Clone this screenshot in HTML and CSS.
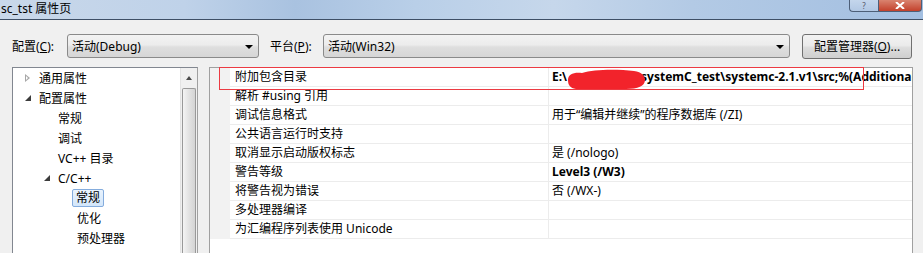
FILE: index.html
```html
<!DOCTYPE html>
<html>
<head>
    <meta charset="utf-8">
    <title>sc_tst 属性页</title>
    <link rel="stylesheet" href="styles.css">
</head>
<body>
    <div class="titlebar">
        <span class="title">sc_tst 属性页</span>
        <div class="caption-btns">
            <span class="cap-help">?</span>
            <span class="cap-close">
                <svg width="10" height="7" viewBox="0 0 10 7">
                    <path d="M1 0 L9 7 M9 0 L1 7" stroke="#fff" stroke-width="2"/>
                </svg>
            </span>
        </div>
    </div>

    <div class="toolbar">
        <label class="lbl lbl-config">配置(<u>C</u>):</label>
        <div class="combo combo-config">
            <span>活动(Debug)</span>
            <span class="arrow"></span>
        </div>
        <label class="lbl lbl-platform">平台(<u>P</u>):</label>
        <div class="combo combo-platform">
            <span>活动(Win32)</span>
            <span class="arrow"></span>
        </div>
        <button class="btn">配置管理器(<u>O</u>)...</button>
    </div>

    <div class="main">
        <div class="tree">
            <ul class="tree-list">
                <li class="lvl0"><span class="tw tw-closed"></span><span class="txt">通用属性</span></li>
                <li class="lvl0"><span class="tw tw-open"></span><span class="txt">配置属性</span></li>
                <li class="lvl1"><span class="tw"></span><span class="txt">常规</span></li>
                <li class="lvl1"><span class="tw"></span><span class="txt">调试</span></li>
                <li class="lvl1"><span class="tw"></span><span class="txt">VC++ 目录</span></li>
                <li class="lvl1"><span class="tw tw-open"></span><span class="txt">C/C++</span></li>
                <li class="lvl2"><span class="tw"></span><span class="txt selected">常规</span></li>
                <li class="lvl2"><span class="tw"></span><span class="txt">优化</span></li>
                <li class="lvl2"><span class="tw"></span><span class="txt">预处理器</span></li>
            </ul>
            <div class="vscroll">
                <div class="vs-up"><span class="vs-arrow"></span></div>
                <div class="vs-thumb"></div>
            </div>
        </div>

        <div class="grid">
            <div class="prop">
                <span class="gut"></span>
                <span class="name">附加包含目录</span>
                <span class="val bold">E:\<span class="hidden-part"></span>systemC_test\systemc-2.1.v1\src;%(AdditionalIncludeDirectories)</span>
            </div>
            <div class="prop">
                <span class="gut"></span>
                <span class="name">解析 #using 引用</span>
                <span class="val"></span>
            </div>
            <div class="prop">
                <span class="gut"></span>
                <span class="name">调试信息格式</span>
                <span class="val">用于“编辑并继续”的程序数据库 (/ZI)</span>
            </div>
            <div class="prop">
                <span class="gut"></span>
                <span class="name">公共语言运行时支持</span>
                <span class="val"></span>
            </div>
            <div class="prop">
                <span class="gut"></span>
                <span class="name">取消显示启动版权标志</span>
                <span class="val">是 (/nologo)</span>
            </div>
            <div class="prop">
                <span class="gut"></span>
                <span class="name">警告等级</span>
                <span class="val bold">Level3 (/W3)</span>
            </div>
            <div class="prop">
                <span class="gut"></span>
                <span class="name">将警告视为错误</span>
                <span class="val">否 (/WX-)</span>
            </div>
            <div class="prop">
                <span class="gut"></span>
                <span class="name">多处理器编译</span>
                <span class="val"></span>
            </div>
            <div class="prop">
                <span class="gut"></span>
                <span class="name">为汇编程序列表使用 Unicode</span>
                <span class="val"></span>
            </div>

            <!-- marcas rojas de la captura -->
            <div class="mark-box"></div>
            <svg class="smudge" width="80" height="22" viewBox="0 0 80 22">
                <path d="M2 12 C2 6, 8 4, 16 5 C28 1, 52 1, 68 3 C76 4, 79 8, 79 12 C79 18, 72 21, 60 21 C44 22, 24 22, 10 21 C4 20, 2 17, 2 12 Z" fill="#f2232b"/>
            </svg>
        </div>
    </div>
</body>
</html>
```

FILE: styles.css
```css
* {
    box-sizing: border-box;
}

body {
    margin: 0;
    width: 923px;
    height: 253px;
    overflow: hidden;
    background-color: #f0f0f0;
    font-family: "Noto Sans", "Noto Sans CJK SC", sans-serif;
    font-size: 12px;
    color: #000;
}

u {
    text-decoration: underline;
}

/* Barra de titulo */
.titlebar {
    height: 20px;
    display: flex;
    justify-content: space-between;
    border-bottom: 1px solid #3e4f66;
    background: linear-gradient(90deg, #c9d8ea 0%, #bfd2e9 20%, #a9c2e0 32%, #b9cfe8 45%, #c6d7eb 60%, #b3cae5 75%, #a3bfe1 100%);
}

.title {
    padding-left: 1px;
    line-height: 18px;
    font-size: 12px;
}

.caption-btns {
    display: flex;
    margin-right: 1px;
}

.cap-help,
.cap-close {
    height: 12px;
    display: flex;
    align-items: center;
    justify-content: center;
    border: 1px solid #4d5f78;
    border-top: none;
}

.cap-help {
    width: 29px;
    color: #556;
    font-size: 8px;
    line-height: 10px;
    border-right: none;
    border-radius: 0 0 0 4px;
    background: linear-gradient(#c4d6ec, #b2c8e4);
}

.cap-close {
    width: 44px;
    border-radius: 0 0 4px 0;
    background: linear-gradient(#d9836f, #c3412c);
}

/* Barra de configuracion */
.toolbar {
    display: flex;
    align-items: center;
    height: 24px;
    margin-top: 14px;
    padding-left: 12px;
}

.lbl-config {
    width: 55px;
}

.lbl-platform {
    width: 53px;
    margin-left: 11px;
}

.combo {
    height: 24px;
    display: flex;
    align-items: center;
    justify-content: space-between;
    padding: 0 5px 0 4px;
    border: 1px solid #8a8a8a;
    border-radius: 3px;
    background: linear-gradient(#f3f3f3 0%, #ececec 45%, #dedede 55%, #d6d6d6 100%);
}

.combo-config {
    width: 192px;
}

.combo-platform {
    width: 467px;
}

.arrow {
    width: 0;
    height: 0;
    border-left: 4px solid transparent;
    border-right: 4px solid transparent;
    border-top: 4px solid #000;
    margin-top: 2px;
}

.btn {
    width: 110px;
    height: 25px;
    margin-left: 12px;
    font-family: inherit;
    font-size: 12px;
    color: #000;
    padding: 0;
    border: 1px solid #707070;
    border-radius: 3px;
    background: linear-gradient(#f2f2f2 0%, #ebebeb 45%, #dddddd 55%, #cfcfcf 100%);
}

/* Zona principal */
.main {
    display: flex;
    margin-top: 9px;
    padding-left: 12px;
}

.tree {
    width: 186px;
    height: 186px;
    display: flex;
    border: 1px solid #828790;
    border-right-color: #a0a0a0;
    border-bottom: none;
    background-color: #fff;
}

.tree-list {
    list-style: none;
    margin: 0;
    padding: 0;
    flex: 1;
}

.tree-list li {
    height: 20px;
    display: flex;
    align-items: center;
    white-space: nowrap;
}

.lvl0 { padding-left: 11px; }
.lvl1 { padding-left: 30px; }
.lvl2 { padding-left: 49px; }

.tw {
    width: 14px;
    height: 20px;
    position: relative;
    flex: none;
}

.tw-closed::before {
    content: "";
    position: absolute;
    left: 1px;
    top: 6px;
    width: 0;
    height: 0;
    border-top: 4px solid transparent;
    border-bottom: 4px solid transparent;
    border-left: 5px solid #a7a7a7;
}

.tw-closed::after {
    content: "";
    position: absolute;
    left: 2px;
    top: 8px;
    width: 0;
    height: 0;
    border-top: 2px solid transparent;
    border-bottom: 2px solid transparent;
    border-left: 2px solid #fff;
}

.tw-open::before {
    content: "";
    position: absolute;
    left: 1px;
    top: 7px;
    width: 0;
    height: 0;
    border-left: 6px solid transparent;
    border-bottom: 6px solid #3c3c3c;
}

.txt {
    padding: 0 1px;
}

.txt.selected {
    margin-left: -4px;
    padding: 0 3px;
    height: 18px;
    line-height: 16px;
    border: 1px solid #84acdd;
    border-radius: 2px;
    background: linear-gradient(#e9f3fd, #d3e6fa);
}

.vscroll {
    width: 17px;
    flex: none;
    display: flex;
    flex-direction: column;
    border-left: 1px solid #e3e3e3;
    background-color: #f0f0f0;
}

.vs-up {
    height: 20px;
    flex: none;
    display: flex;
    align-items: center;
    justify-content: center;
}

.vs-arrow {
    width: 0;
    height: 0;
    border-left: 3px solid transparent;
    border-right: 3px solid transparent;
    border-bottom: 4px solid #4a4a4a;
}

.vs-thumb {
    flex: 1;
    margin: 0 1px;
    border: 1px solid #999;
    border-bottom: none;
    border-radius: 2px 2px 0 0;
    background: linear-gradient(90deg, #f4f4f4, #e2e2e2 50%, #d4d4d4);
}

/* Tabla de propiedades */
.grid {
    position: relative;
    width: 704px;
    height: 186px;
    margin-left: 11px;
    border: 1px solid #a0a0a0;
    border-bottom: none;
    background-color: #fff;
}

.prop {
    display: flex;
    height: 19px;
    line-height: 18px;
}

.gut {
    width: 20px;
    flex: none;
    background-color: #f2f2f2;
}

.name,
.val {
    border-bottom: 1px solid #ececec;
    white-space: nowrap;
    overflow: hidden;
}

.name {
    width: 319px;
    flex: none;
    padding-left: 5px;
    border-right: 1px solid #ececec;
}

.val {
    flex: 1;
    padding-left: 3px;
}

.bold {
    font-weight: bold;
}

.hidden-part {
    display: inline-block;
    width: 74px;
    height: 12px;
}

/* Marcas rojas sobre la captura */
.mark-box {
    position: absolute;
    left: 9px;
    top: -1px;
    width: 645px;
    height: 23px;
    border: 1px solid #ec3a42;
    z-index: 2;
}

.smudge {
    position: absolute;
    left: 356px;
    top: 0;
    z-index: 1;
}
```
